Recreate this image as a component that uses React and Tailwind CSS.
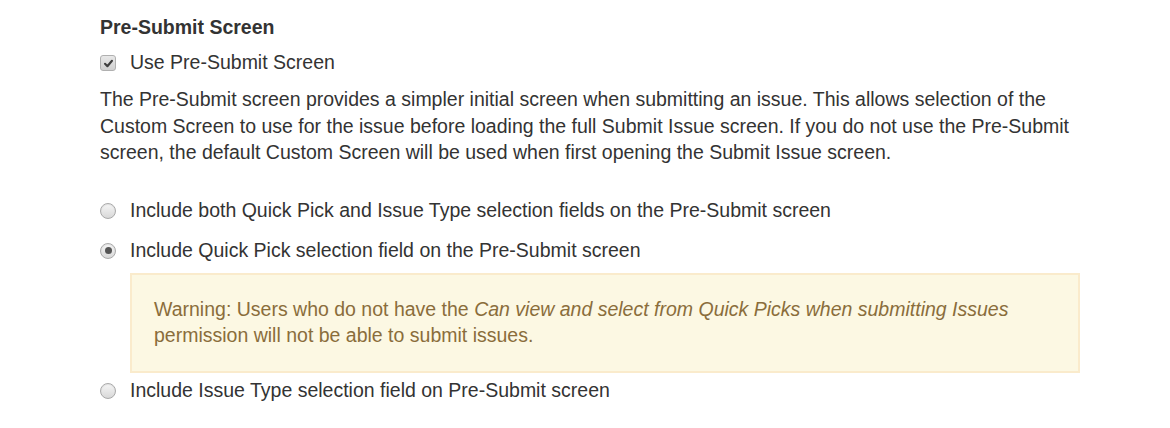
export default function App() {
  const Radio = ({ checked }) => (
    <span className="inline-flex h-[16px] w-[16px] shrink-0 items-center justify-center rounded-full border border-[#a9a9a9] bg-gradient-to-b from-[#f6f6f6] to-[#d8d8d8] shadow-[inset_0_1px_1px_rgba(0,0,0,0.08)]">
      {checked && <span className="h-[7px] w-[7px] rounded-full bg-[#555555]" />}
    </span>
  );

  return (
    <div className="min-h-screen w-[1170px] bg-white pl-[100px] pt-[14px] font-['Liberation_Sans',Arial,sans-serif] text-[19.5px] text-[#333333]">
      <div className="w-[980px]">
        <h3 className="font-bold leading-[26px]">Pre-Submit Screen</h3>

        <label className="mt-[10px] flex h-[26px] items-center">
          <span className="inline-flex h-[16px] w-[16px] shrink-0 items-center justify-center rounded-[3px] border border-[#b0b0b0] bg-gradient-to-b from-[#e8e8e8] to-[#d0d0d0]">
            <svg viewBox="0 0 12 12" className="h-[11px] w-[11px]">
              <path d="M2.2 6.4 L4.8 9 L9.8 3" fill="none" stroke="#3f3f3f" strokeWidth="2.3" strokeLinecap="round" strokeLinejoin="round" />
            </svg>
          </span>
          <span className="ml-[14px]">Use Pre-Submit Screen</span>
        </label>

        <p className="mt-[10px] leading-[26.5px]">
          The Pre-Submit screen provides a simpler initial screen when submitting an issue. This allows selection of the Custom Screen to use for the issue before loading the full Submit Issue screen. If you do not use the Pre-Submit screen, the default Custom Screen will be used when first opening the Submit Issue screen.
        </p>

        <label className="mt-[32px] flex h-[26px] items-center">
          <Radio />
          <span className="ml-[14px]">Include both Quick Pick and Issue Type selection fields on the Pre-Submit screen</span>
        </label>

        <label className="mt-[14px] flex h-[26px] items-center">
          <Radio checked />
          <span className="ml-[14px]">Include Quick Pick selection field on the Pre-Submit screen</span>
        </label>

        <div className="ml-[30px] mt-[9px] border-2 border-[#faebcc] bg-[#fcf8e3] px-[22px] pb-[23px] pt-[21px] leading-[26px] text-[#8a6d3b]">
          Warning: Users who do not have the <em>Can view and select from Quick Picks when submitting Issues</em> permission will not be able to submit issues.
        </div>

        <label className="mt-[5px] flex h-[26px] items-center">
          <Radio />
          <span className="ml-[14px]">Include Issue Type selection field on Pre-Submit screen</span>
        </label>
      </div>
    </div>
  );
}
